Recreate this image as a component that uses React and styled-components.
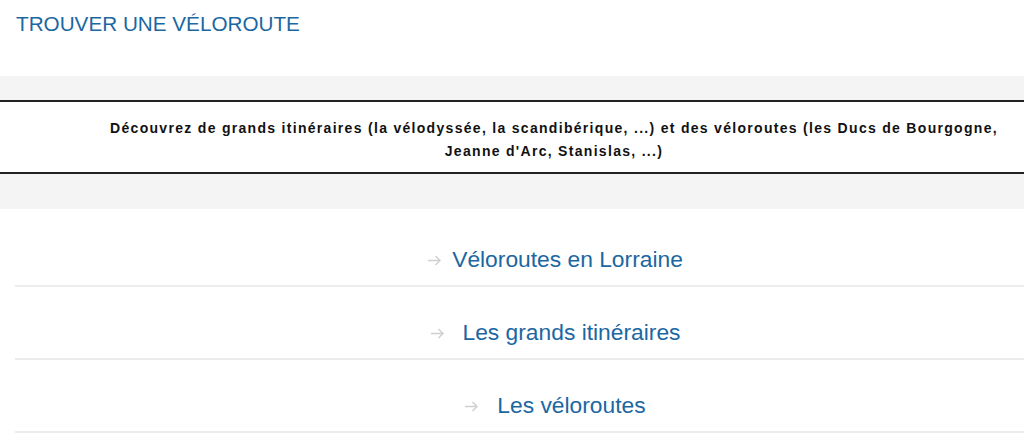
import styled, { createGlobalStyle } from "styled-components";

const GlobalStyle = createGlobalStyle`
  body {
    margin: 0;
    background: #fff;
    font-family: "Liberation Sans", Arial, sans-serif;
  }
`;

const links = [
  { label: "Véloroutes en Lorraine", gap: 10 },
  { label: "Les grands itinéraires", gap: 18 },
  { label: "Les véloroutes", gap: 18 },
];

function Arrow() {
  return (
    <svg width="15" height="11" viewBox="0 0 15 11" fill="none">
      <path d="M1 5.5h12M8.5 1l4.5 4.5L8.5 10" stroke="#cfcfcf" strokeWidth="1.4" />
    </svg>
  );
}

export default function App() {
  return (
    <>
      <GlobalStyle />
      <Title>TROUVER UNE VÉLOROUTE</Title>
      <Band>
        <Intro>
          <p>
            Découvrez de grands itinéraires (la vélodyssée, la scandibérique, ...) et des véloroutes (les Ducs de Bourgogne, Jeanne d'Arc, Stanislas, ...)
          </p>
        </Intro>
      </Band>
      <LinkList>
        {links.map((l) => (
          <LinkRow key={l.label}>
            <LinkItem href="#" $gap={l.gap}>
              <Arrow />
              <span>{l.label}</span>
            </LinkItem>
          </LinkRow>
        ))}
      </LinkList>
    </>
  );
}

const Title = styled.h1`
  margin: 0;
  padding: 12px 16px 0;
  height: 64px;
  font-size: 20.7px;
  font-weight: 400;
  color: #1b67a2;
  line-height: 24px;
`;

const Band = styled.section`
  background: #f4f4f4;
  padding: 24px 0 35px;
`;

const Intro = styled.div`
  background: #fff;
  border-top: 2px solid #222;
  border-bottom: 2px solid #222;
  padding: 15px 0 9px 84px;
  text-align: center;

  p {
    margin: 0;
    font-size: 14px;
    font-weight: 700;
    line-height: 23px;
    letter-spacing: 1.3px;
    color: #111;
  }
`;

const LinkList = styled.ul`
  list-style: none;
  margin: 5px 0 0 15px;
  padding: 0;
`;

const LinkRow = styled.li`
  border-bottom: 2px solid #ececec;
  padding: 32px 0 13px 71px;
  text-align: center;
  height: 26px;
`;

const LinkItem = styled.a`
  display: inline-flex;
  align-items: center;
  gap: ${(p) => p.$gap}px;
  font-size: 22.8px;
  line-height: 26px;
  color: #1b67a2;
  text-decoration: none;

  svg {
    margin-top: 2px;
  }
`;
